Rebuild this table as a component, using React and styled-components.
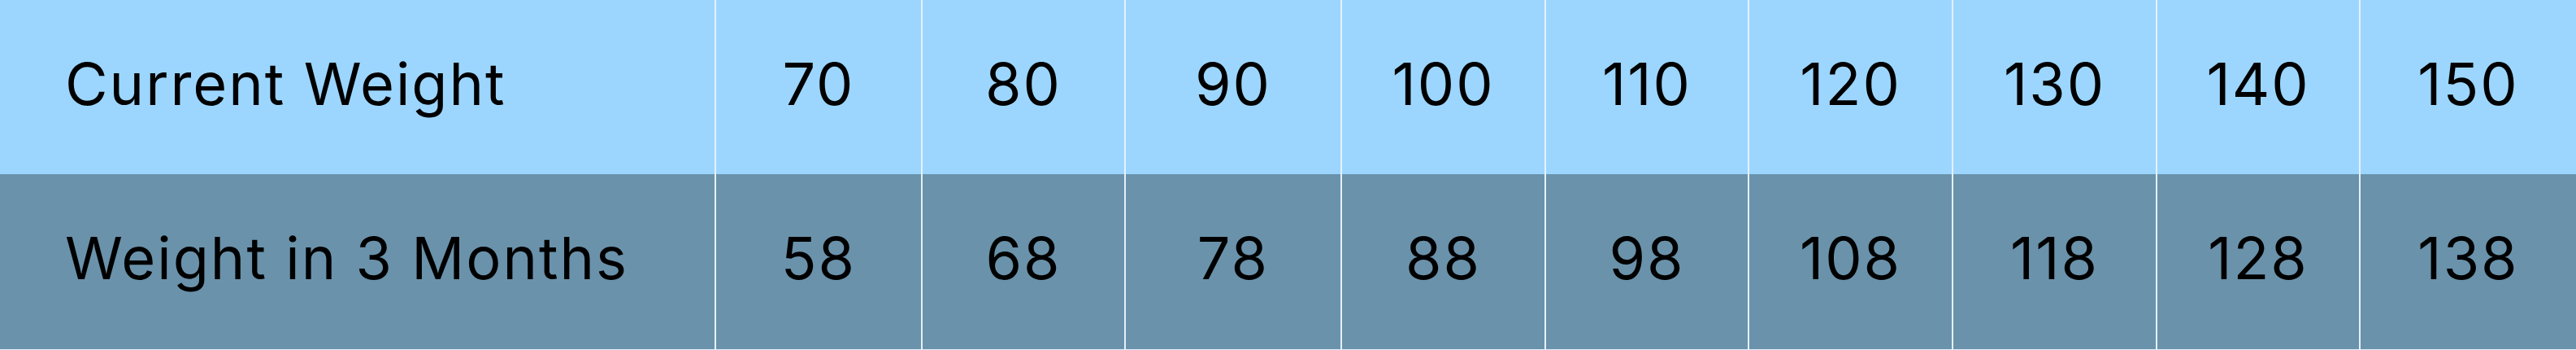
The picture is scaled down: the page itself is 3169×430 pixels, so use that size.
import React from 'react'
import styled, { createGlobalStyle } from 'styled-components'

const GlobalStyle = createGlobalStyle`
  html, body {
    margin: 0;
    padding: 0;
    background: #ffffff;
  }
`

const rows = [
  { label: 'Current Weight', values: [70, 80, 90, 100, 110, 120, 130, 140, 150], tone: 'light' },
  { label: 'Weight in 3 Months', values: [58, 68, 78, 88, 98, 108, 118, 128, 138], tone: 'dark' },
]

const Table = styled.div`
  display: grid;
  grid-template-columns: 879px 252px 248px 264px 249px 248px 249px 249px 248px 1fr;
  grid-template-rows: 214px 215px;
  column-gap: 2px;
  padding-bottom: 1px;
  width: 3169px;
  background: #e4f1fa;
  font-family: Inter, "Noto Sans", sans-serif;
  color: #000;
`

const Cell = styled.div`
  display: flex;
  align-items: center;
  justify-content: ${p => (p.$label ? 'flex-start' : 'center')};
  padding-left: ${p => (p.$label ? '80px' : '0')};
  padding-bottom: 10px;
  box-sizing: border-box;
  background: ${p => (p.$tone === 'dark' ? '#6a92ab' : '#9cd6fe')};
  font-size: 72px;
  font-weight: 400;
  letter-spacing: 2px;
  white-space: nowrap;
`

const App = () => {
  return (
    <>
      <GlobalStyle />
      <Table>
        {rows.map(row => (
          <React.Fragment key={row.label}>
            <Cell $label $tone={row.tone}>{row.label}</Cell>
            {row.values.map(v => (
              <Cell key={v} $tone={row.tone}>{v}</Cell>
            ))}
          </React.Fragment>
        ))}
      </Table>
    </>
  )
}

export default App
